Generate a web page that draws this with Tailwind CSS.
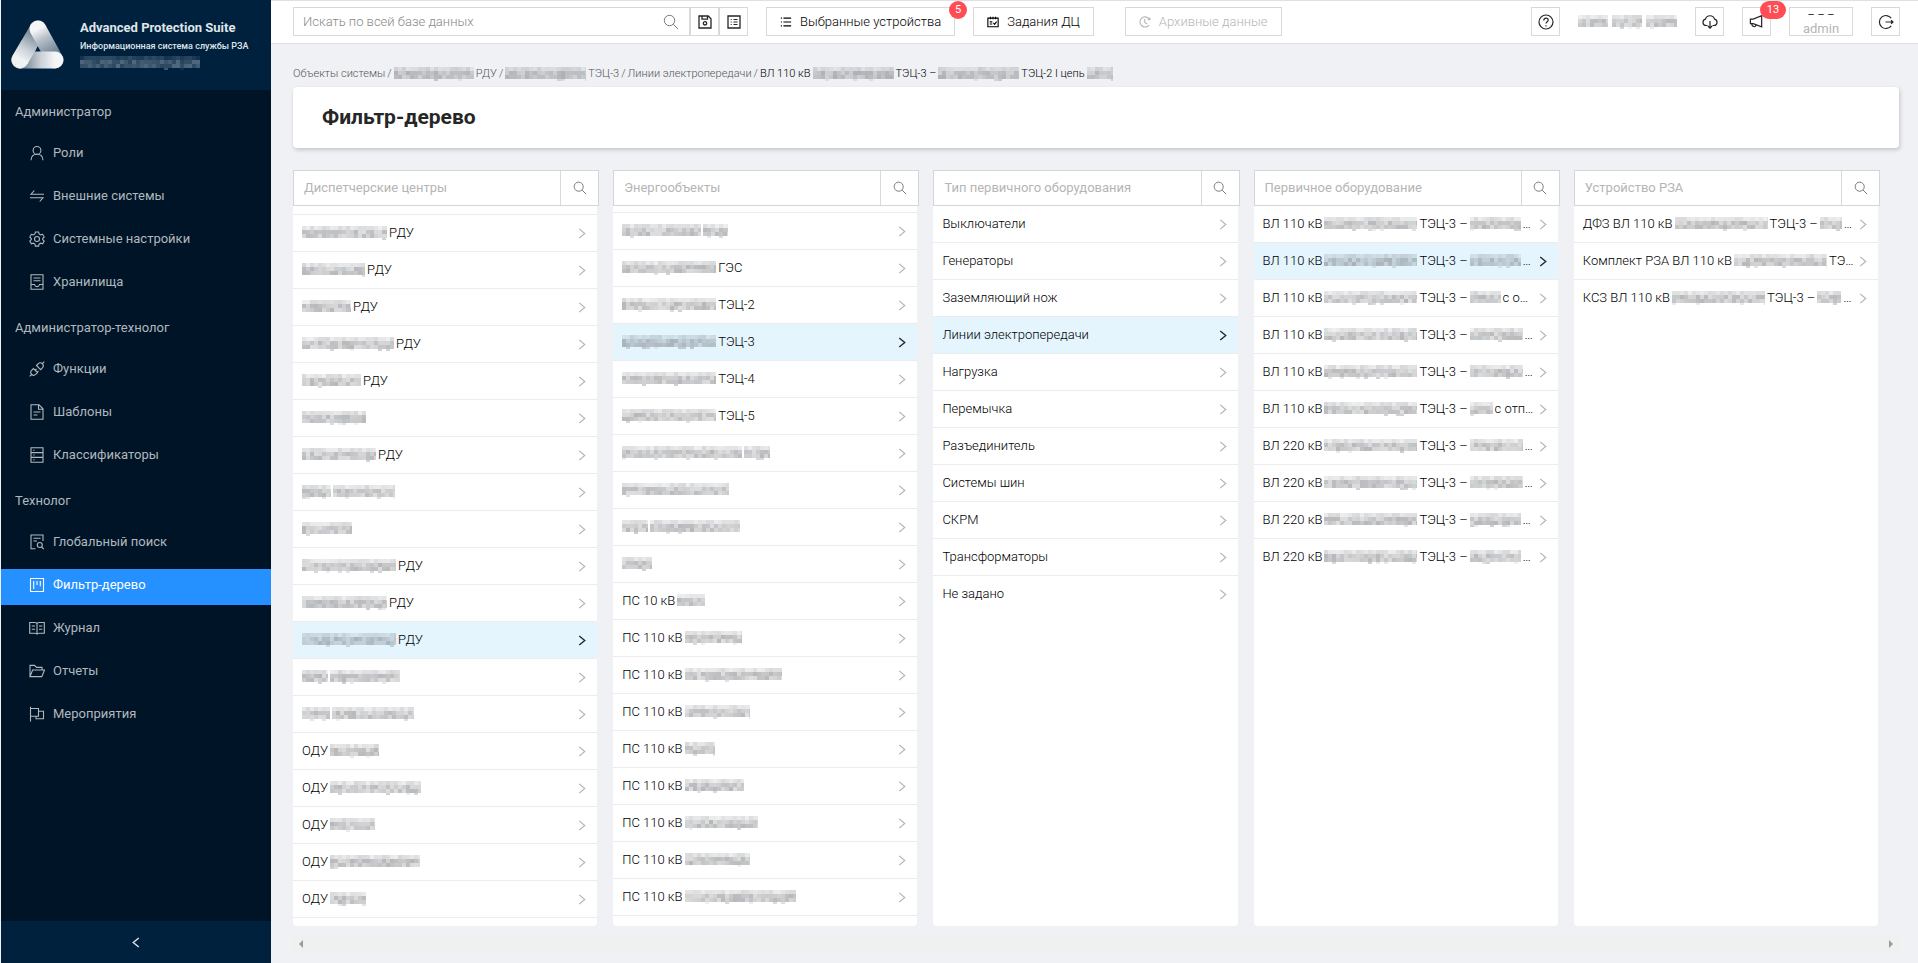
<!DOCTYPE html>
<html lang="ru">
<head>
<meta charset="utf-8">
<title>Фильтр-дерево</title>
<script src="https://cdn.jsdelivr.net/npm/@tailwindcss/browser@4"></script>
</head>
<body class="flex min-h-screen bg-[#f0f1f5] pl-px font-['Roboto','Noto_Sans',sans-serif] text-[13px] text-[#262626]">

<svg class="hidden" aria-hidden="true">
  <symbol id="search" viewBox="0 0 16 16"><circle cx="6.5" cy="6.5" r="5.2"/><path d="M10.3 10.3 15 15"/></symbol>
  <symbol id="right" viewBox="0 0 8 12"><path d="M1 1l6 5-6 5"/></symbol>
  <symbol id="user" viewBox="0 0 16 16"><circle cx="8" cy="5.4" r="3.9"/><path d="M2 15.2c.2-3.6 2.6-5.9 6-5.9s5.800 2.300 6 5.900"/></symbol>
  <symbol id="swap" viewBox="0 0 16 16"><path d="M15 6.200H2L5.300 2.500M1 9.800h13l-3.300 3.700"/></symbol>
  <symbol id="gear" viewBox="0 0 16 16"><circle cx="8" cy="8" r="2.500"/><path d="M6.400 1h3.200l.5 2 1.500.9 2-.6 1.600 2.800-1.500 1.400v1.100l1.500 1.400-1.600 2.800-2-.6-1.500.9-.5 2H6.400l-.5-2-1.500-.9-2 .6L.8 10l1.500-1.400V7.500L.8 6.100l1.600-2.800 2 .6L5.900 3z"/></symbol>
  <symbol id="store" viewBox="0 0 16 16"><path d="M2 .8h12v14.400H2zM4.500 4h7M4.500 6.800h7M2 10.500h3.500c.3 1.400 1.200 2.100 2.500 2.100s2.200-.7 2.500-2.100H14"/></symbol>
  <symbol id="plug" viewBox="0 0 16 16"><path d="M7.500 4.500l1.800-1.800a2.900 2.900 0 0 1 4.100 4.100l-1.800 1.800zM8.500 11.600l-1.800 1.800a2.900 2.900 0 0 1-4.100-4.100l1.800-1.800zM13.400 2.600 15.300.7M.7 15.300l1.900-1.900M6.200 9.300l1.400-1.400M8.100 11.200l1.400-1.400"/></symbol>
  <symbol id="file" viewBox="0 0 16 16"><path d="M2 .8h8l4 4v10.400H2zM9.500 1v4.300H14M4.500 8h7M4.500 11h4"/></symbol>
  <symbol id="db" viewBox="0 0 16 16"><path d="M2 .8h12v14.400H2zM2 5.600h12M2 10.400h12M4.300 3.200h1.200M4.300 8h1.200M4.300 12.800h1.200"/></symbol>
  <symbol id="filesearch" viewBox="0 0 16 16"><path d="M6.500 14.800H2V1h12v6M4.500 4.200h7M4.500 7h3.500M12.600 13l2.200 2.200"/><circle cx="10.800" cy="11" r="2.500"/></symbol>
  <symbol id="project" viewBox="0 0 16 16"><path d="M1.500 1.500h13v13h-13zM4.700 4v8M8 4v4M11.300 4v5.200"/></symbol>
  <symbol id="read" viewBox="0 0 16 16"><path d="M.7 2.500h5c1.300 0 2.300.8 2.300 1.600 0-.8 1-1.600 2.300-1.600h5v10.800h-5c-1.300 0-2.300.6-2.300 1.200 0-.6-1-1.200-2.300-1.200h-5zM8 4v10M2.700 6H6M2.700 9.300H6M10 6h3.300M10 9.300h3.300"/></symbol>
  <symbol id="folder" viewBox="0 0 16 16"><path d="M1 13.600V2.400h4.500l2 2h5.500V7M1 13.600 3.600 7h11.900l-2.700 6.600z"/></symbol>
  <symbol id="flag" viewBox="0 0 16 16"><path d="M1.500.8v14.600M1.500 2.500h8v7.800h-8M9.500 5.300h5v7.500H7v-2.500"/></symbol>
  <symbol id="save" viewBox="0 0 14 14"><path d="M1 1h9.200L13 3.800V13H1zM4 1.200v2.900h5.500V1.200"/><circle cx="7" cy="8.300" r="1.700"/></symbol>
  <symbol id="profile" viewBox="0 0 14 14"><path d="M1 1h12v12H1z"/><path stroke-width="1" d="M6.500 4.500h4M6.500 7h4M6.500 9.500h4M3.700 4.500h1M3.700 7h1M3.700 9.500h1"/></symbol>
  <symbol id="list" viewBox="0 0 14 14"><path d="M4 2.500h9M4 7h9M4 11.500h9M1 2.500h1.300M1 7h1.300M1 11.500h1.300"/></symbol>
  <symbol id="cal" viewBox="0 0 14 14"><path d="M1 2.500h12v10H1zM4 .8v3M7 .8v3M10 .8v3M3.200 6.800h3M3.200 9.300h3M7.500 8l1.400 1.700 2.300-3.200"/></symbol>
  <symbol id="history" viewBox="0 0 14 14"><path d="M11.700 10.600A5.900 5.900 0 1 1 11.400 3l1 1.100M12.700 1.700v2.600h-2.500M6.700 3.500v4l2.800 1.800"/></symbol>
  <symbol id="help" viewBox="0 0 16 16"><circle cx="8" cy="8" r="7"/><path d="M5.800 6.500C5.800 5 6.700 4.200 8 4.200s2.200.8 2.200 2c0 1.500-2.200 1.700-2.200 3.400M8 11.200v1.200"/></symbol>
  <symbol id="cloud" viewBox="0 0 16 16"><path d="M5.500 11.500H4a3.200 3.200 0 0 1-.6-6.300 4.800 4.800 0 0 1 9.200 0 3.200 3.200 0 0 1-.6 6.300h-1.500M8 7v7M5.900 12 8 14.200l2.100-2.200"/></symbol>
  <symbol id="horn" viewBox="0 0 16 16"><path d="M1.500 5.500h3L13.500 1.800v12L4.500 10.200h-3zM3 10.400c0 3.600 4.200 3.800 4.600 1.200"/></symbol>
  <symbol id="logout" viewBox="0 0 16 16"><path d="M13.200 4.200a6.500 6.500 0 1 0 0 7.600M7.500 8h7.500M13 6.200 15 8l-2 1.800"/></symbol>
</svg>

<aside class="flex w-[270px] shrink-0 flex-col bg-[#001427]">
  <div class="flex h-[90px] items-center bg-[#00213d] pl-[9px]">
    <svg class="size-14 shrink-0" viewBox="9 17 56 56" fill="none" stroke-width="17" stroke-linecap="round" aria-hidden="true">
      <defs>
        <linearGradient id="ga" gradientUnits="userSpaceOnUse" x1="19" y1="60" x2="37" y2="29"><stop offset="0" stop-color="#f4f5f6"/><stop offset=".35" stop-color="#c9d0d6"/><stop offset="1" stop-color="#5c7185"/></linearGradient>
        <linearGradient id="gb" gradientUnits="userSpaceOnUse" x1="37" y1="29" x2="54" y2="60"><stop offset="0" stop-color="#f4f5f6"/><stop offset=".3" stop-color="#b9c2ca"/><stop offset="1" stop-color="#586e82"/></linearGradient>
        <linearGradient id="gc" gradientUnits="userSpaceOnUse" x1="54" y1="60" x2="19" y2="60"><stop offset="0" stop-color="#f4f5f6"/><stop offset=".4" stop-color="#ccd2d8"/><stop offset="1" stop-color="#65798b"/></linearGradient>
      </defs>
      <path stroke="url(#ga)" d="M19 60 37 29"/>
      <path stroke="url(#gb)" d="M37 29 54 60"/>
      <path stroke="url(#gc)" d="M54 60H19"/>
      <circle cx="19" cy="60" r="8.500" fill="#eff1f3" stroke="none"/>
      <path stroke="url(#ga)" stroke-linecap="butt" d="M19 60 28 44.500"/>
    </svg>
    <div class="pl-[14px] text-[#dfe5ea]">
      <div class="text-[13px] leading-[18px] font-bold">Advanced Protection Suite</div>
      <div class="text-[9px] leading-[18px] font-medium">Информационная система службы РЗА</div>
      <div class="flex h-4 items-center"><i data-m="120" data-tone="dark"></i></div>
    </div>
  </div>
  <nav id="menu" class="grow pt-[3px] text-[#b0b8be]" aria-label="Меню"></nav>
  <button class="flex h-[42px] items-center justify-center bg-[#00213d]" aria-label="Свернуть меню">
    <svg class="h-[11px] w-2 -scale-x-100 fill-none stroke-[#dfe5ea] stroke-[1.5]"><use href="#right"/></svg>
  </button>
</aside>

<div class="flex min-w-0 grow flex-col">
  <header class="flex h-11 items-center border-y border-[#e0e1e3] bg-white pr-[18px] pb-px pl-[22px] text-[#262626]">
    <div class="flex">
      <label class="flex h-[29px] w-[397px] items-center border border-[#d9d9d9] pr-[10px] pl-[9px]">
        <input class="min-w-0 grow font-light outline-none placeholder:text-[#888]" type="search" placeholder="Искать по всей базе данных" aria-label="Поиск">
        <svg class="size-4 fill-none stroke-[#777]"><use href="#search"/></svg>
      </label>
      <button class="flex h-[29px] w-[29px] items-center justify-center border border-[#d9d9d9]" aria-label="Сохранить"><svg class="size-[14px] fill-none stroke-current stroke-[1.3]"><use href="#save"/></svg></button>
      <button class="flex h-[29px] w-[29px] items-center justify-center border border-[#d9d9d9]" aria-label="Список"><svg class="size-[14px] fill-none stroke-current stroke-[1.3]"><use href="#profile"/></svg></button>
    </div>
    <button class="relative ml-[18px] flex h-[29px] items-center gap-2 border border-[#d9d9d9] px-[13px] font-light whitespace-nowrap text-black">
      <svg class="size-3 fill-none stroke-current stroke-[1.3]"><use href="#list"/></svg>Выбранные устройства
      <span class="absolute -top-[7px] -right-[13px] h-[18px] min-w-[18px] rounded-full bg-[#ff4d55] text-center text-[11px] leading-[18px] font-normal text-white">5</span>
    </button>
    <button class="ml-[18px] flex h-[29px] items-center gap-2 border border-[#d9d9d9] px-[13px] font-light whitespace-nowrap text-black">
      <svg class="size-3 fill-none stroke-current stroke-[1.3]"><use href="#cal"/></svg>Задания ДЦ
    </button>
    <button class="ml-[31px] flex h-[29px] items-center gap-2 border border-[#d9d9d9] px-[13px] font-light whitespace-nowrap text-[#b5b5b5]" disabled>
      <svg class="size-3 fill-none stroke-current stroke-[1.3]"><use href="#history"/></svg>Архивные данные
    </button>
    <div class="ml-auto flex items-center gap-[18px]">
      <button class="flex h-[29px] w-[29px] items-center justify-center border border-[#d9d9d9]" aria-label="Справка"><svg class="size-4 fill-none stroke-current stroke-[1.2]"><use href="#help"/></svg></button>
      <span class="flex w-[99px] gap-1"><i data-m="30"></i><i data-m="30"></i><i data-m="31"></i></span>
      <button class="flex h-[29px] w-[29px] items-center justify-center border border-[#d9d9d9]" aria-label="Загрузки"><svg class="size-4 fill-none stroke-current stroke-[1.2]"><use href="#cloud"/></svg></button>
      <button class="relative flex h-[29px] w-[29px] items-center justify-center border border-[#d9d9d9]" aria-label="Уведомления"><svg class="size-[15px] fill-none stroke-current stroke-[1.3]"><use href="#horn"/></svg>
        <span class="absolute -top-[7px] -right-4 h-[18px] w-[26px] rounded-full bg-[#ff4d55] text-center text-[11px] leading-[18px] text-white">13</span></button>
      <button class="flex h-[29px] w-16 flex-col items-center border border-[#d9d9d9]"><span class="text-[11px] leading-[13px]">– – –</span><span class="leading-[16px] text-[#b5b5b5]">admin</span></button>
      <button class="flex h-[29px] w-[29px] items-center justify-center border border-[#d9d9d9]" aria-label="Выход"><svg class="size-4 fill-none stroke-current stroke-[1.2]"><use href="#logout"/></svg></button>
    </div>
  </header>

  <main class="flex grow flex-col pr-[19px] pb-[11px] pl-[22px]">
    <nav class="mt-[21px] flex h-[18px] items-center gap-[2px] text-[11px] font-light whitespace-nowrap text-[#555]" aria-label="Путь">
      <a href="#">Объекты системы</a><span>/</span><i data-m="80"></i><a href="#">РДУ</a><span>/</span><i data-m="81"></i><a href="#">ТЭЦ-3</a><span>/</span><a href="#">Линии электропередачи</a><span>/</span>
      <span class="flex items-center gap-[2px] text-black">ВЛ 110 кВ<i data-m="81"></i>ТЭЦ-3 –<i data-m="81"></i>ТЭЦ-2 I цепь<i data-m="26"></i></span>
    </nav>
    <section class="mt-1 flex h-[61px] items-center rounded bg-white pb-[2px] pl-[29px] shadow-[1px_2px_4px_rgba(0,0,0,0.18)]">
      <h1 class="text-[21px] leading-7 font-bold">Фильтр-дерево</h1>
    </section>
    <div id="columns" class="mt-[22px] grid grow grid-cols-5 gap-[14px] pr-[19px]"></div>
    <div class="mt-[10px] flex h-4 items-center justify-between bg-[#f0f0f0] px-[6px]">
      <span class="h-2 border-y-4 border-r-4 border-y-transparent border-r-[#999]"></span>
      <span class="h-2 border-y-4 border-l-4 border-y-transparent border-l-[#999]"></span>
    </div>
  </main>
</div>

<script>
// Masked text: {n} is a block of n pixels, everything else is plain text.
const menu = [
  ['Администратор', [['user','Роли'],['swap','Внешние системы'],['gear','Системные настройки'],['store','Хранилища']]],
  ['Администратор-технолог', [['plug','Функции'],['file','Шаблоны'],['db','Классификаторы']]],
  ['Технолог', [['filesearch','Глобальный поиск'],['project','Фильтр-дерево'],['read','Журнал'],['folder','Отчеты'],['flag','Мероприятия']]],
];
const columns = [
  {title:'Диспетчерские центры', lead:'h-[9px]', on:11, rows:['{85}РДУ','{63}РДУ','{49}РДУ','{92}РДУ','{59}РДУ','{64}','{74}РДУ','{29}{62}','{50}','{94}РДУ','{85}РДУ','{94}РДУ','{26}{70}','{28}{82}','ОДУ{49}','ОДУ{91}','ОДУ{45}','ОДУ{90}','ОДУ{36}']},
  {title:'Энергообъекты', lead:'h-[7px]', on:3, rows:['{79}{25}','{94}ГЭС','{94}ТЭЦ-2','{94}ТЭЦ-3','{94}ТЭЦ-4','{94}ТЭЦ-5','{120}{26}','{107}','{26}{90}','{30}','ПС 10 кВ{28}','ПС 110 кВ{57}','ПС 110 кВ{97}','ПС 110 кВ{65}','ПС 110 кВ{30}','ПС 110 кВ{59}','ПС 110 кВ{73}','ПС 110 кВ{65}','ПС 110 кВ{111}']},
  {title:'Тип первичного оборудования', on:3, rows:['Выключатели','Генераторы','Заземляющий нож','Линии электропередачи','Нагрузка','Перемычка','Разъединитель','Системы шин','СКРМ','Трансформаторы','Не задано']},
  {title:'Первичное оборудование', on:1, rows:['ВЛ 110 кВ{93}ТЭЦ-3 –{51}…','ВЛ 110 кВ{93}ТЭЦ-3 –{51}…','ВЛ 110 кВ{93}ТЭЦ-3 –{31}с о…','ВЛ 110 кВ{93}ТЭЦ-3 –{53}…','ВЛ 110 кВ{93}ТЭЦ-3 –{53}…','ВЛ 110 кВ{93}ТЭЦ-3 –{23}с отп…','ВЛ 220 кВ{93}ТЭЦ-3 –{53}…','ВЛ 220 кВ{93}ТЭЦ-3 –{53}…','ВЛ 220 кВ{93}ТЭЦ-3 –{51}…','ВЛ 220 кВ{93}ТЭЦ-3 –{51}…']},
  {title:'Устройство РЗА', rows:['ДФЗ ВЛ 110 кВ{93}ТЭЦ-3 –{22}…','Комплект РЗА ВЛ 110 кВ{93}ТЭ…','КСЗ ВЛ 110 кВ{93}ТЭЦ-3 –{24}…']},
];

document.getElementById('menu').innerHTML = menu.map(([name, items]) =>
  `<h2 class="h-11 pl-[14px] leading-[38px]">${name}</h2>` + items.map(([icon, text]) =>
    `<a href="#" class="mb-[7px] flex h-9 items-center gap-2 pb-1 pl-7 ${text === 'Фильтр-дерево' ? 'bg-[#2590ff] text-white' : ''}"><svg class="size-4 fill-none stroke-current stroke-[1.1]"><use href="#${icon}"/></svg>${text}</a>`).join('')
).join('');

const parts = s => s.split(/(\{\d+\})/).filter(Boolean).map(p => p[0] === '{' ? `<i data-m="${p.slice(1, -1)}"></i>` : `<span>${p}</span>`).join('');
document.getElementById('columns').innerHTML = columns.map(c => `
  <section class="flex min-w-0 flex-col">
    <div class="flex h-9 shrink-0 border border-[#d4d5d7] bg-white">
      <input class="min-w-0 grow pl-[10px] outline-none placeholder:text-[#b5b5b5]" placeholder="${c.title}" aria-label="${c.title}">
      <button class="flex w-[38px] items-center justify-center border-l border-[#d9d9d9]" aria-label="Найти"><svg class="size-[14px] fill-none stroke-[#777] stroke-[1.1]"><use href="#search"/></svg></button>
    </div>
    <ul class="mr-[2px] grow rounded-b bg-white">
      ${c.lead ? `<li class="${c.lead} border-b border-[#ececee]"></li>` : ''}
      ${c.rows.map((r, i) => `<li class="border-[#ececee] ${c.lead ? 'border-b' : 'border-b last:border-b-0'}"><button class="flex h-9 w-full items-center pr-[11px] pl-[9px] text-left font-light whitespace-nowrap text-black ${i === c.on ? 'bg-[#e4f5fe]' : ''}"><span class="flex min-w-0 grow items-center gap-[2px]">${parts(r)}</span><svg class="h-[11px] w-2 shrink-0 fill-none ${i === c.on ? 'stroke-[#262626] stroke-[1.5]' : 'stroke-[#b0b0b0] stroke-[1.2]'}"><use href="#right"/></svg></button></li>`).join('')}
    </ul>
  </section>`).join('');

// Each masked block is a small mosaic of grey cells.
let seed = 7;
const rnd = () => (seed = (seed * 16807) % 2147483647) / 2147483647;
document.querySelectorAll('[data-m]').forEach(el => {
  const w = +el.dataset.m, dark = el.dataset.tone === 'dark';
  let cells = '';
  for (let x = 0; x < w; x += 4) for (let y = 0; y < 4; y++) {
    if (y === 3 && rnd() > .15) continue;
    const base = y === 0 ? .1 : y === 3 ? .08 : .2, a = base + rnd() * (y === 0 ? .14 : .22);
    cells += `<rect x="${x}" y="${y * 4}" width="${Math.min(4, w - x)}" height="4" fill="${dark ? '#c5d2e0' : ['#555', '#5a5560', '#555f63'][Math.floor(rnd() * 3)]}" opacity="${a.toFixed(2)}"/>`;
  }
  el.className = 'block shrink-0';
  el.innerHTML = `<svg class="block" width="${w}" height="14" viewBox="0 0 ${w} 14" shape-rendering="crispEdges" aria-hidden="true">${cells}</svg>`;
});
</script>
</body>
</html>
